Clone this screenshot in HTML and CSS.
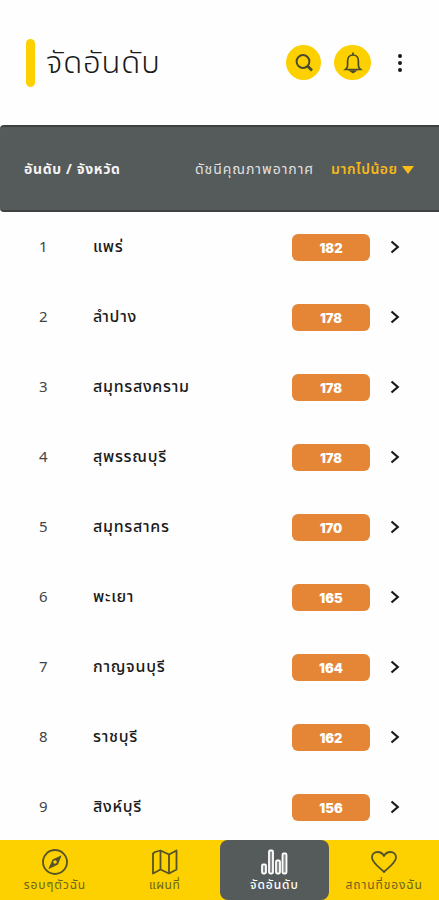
FILE: index.html
```html
<!DOCTYPE html>
<html lang="th">
<head>
    <meta charset="UTF-8">
    <meta name="viewport" content="width=device-width, initial-scale=1.0">
    <title>จัดอันดับ</title>
    <link rel="stylesheet" href="styles.css">
</head>
<body>
    <div class="app">
        <header class="top-bar">
            <span class="title-mark"></span>
            <h1>จัดอันดับ</h1>
            <button class="round-btn search-btn" aria-label="ค้นหา">
                <svg width="20" height="20" viewBox="0 0 20 20" fill="none" stroke="#4a4a30">
                    <circle cx="9" cy="8.5" r="6.4" stroke-width="2"/>
                    <path d="M13 12.5l5 5" stroke-width="2.6"/>
                </svg>
            </button>
            <button class="round-btn bell-btn" aria-label="แจ้งเตือน">
                <svg width="20" height="22" viewBox="0 0 20 22" fill="none" stroke="#4a4a30" stroke-width="1.7">
                    <path d="M2.500 17.500c1.500-1.200 2.100-2 2.100-4V9c0-3.500 2.200-6 5.400-6s5.400 2.500 5.400 6v4.500c0 2 .6 2.800 2.100 4z"/>
                    <path d="M10 .5v2.500"/>
                    <path d="M8 19.200h4l-2 1.300z" fill="#4a4a30"/>
                </svg>
            </button>
            <button class="more-btn" aria-label="เมนู">
                <span></span><span></span><span></span>
            </button>
        </header>

        <div class="list-header">
            <span class="col-rank">อันดับ / จังหวัด</span>
            <span class="col-index">ดัชนีคุณภาพอากาศ</span>
            <span class="col-sort">มากไปน้อย</span>
            <span class="caret"></span>
        </div>

        <ul class="rank-list" id="rankList"></ul>

        <nav class="bottom-nav">
            <a class="nav-item">
                <svg width="28" height="28" viewBox="0 0 28 28" fill="none" stroke="#55532a" stroke-width="1.8">
                    <circle cx="14" cy="14" r="12"/>
                    <path d="M19.500 8.500l-3 7.500-8 4 3.500-8z" fill="#55532a" stroke-width="1.200"/>
                    <circle cx="14" cy="14" r="1.800" fill="#fdd000" stroke="none"/>
                </svg>
                <span class="nav-label nav-around">รอบๆตัวฉัน</span>
            </a>
            <a class="nav-item">
                <svg width="28" height="28" viewBox="0 0 28 28" fill="none" stroke="#55532a" stroke-width="1.8" stroke-linejoin="round">
                    <path d="M2 5.500l2-1.500 5.500-1.500 8.500 4 7.500-4v19l-7.500 4-8.500-4-7.500 4z"/>
                    <path d="M9.500 2.500v19M18 6.500v19"/>
                </svg>
                <span class="nav-label nav-map">แผนที่</span>
            </a>
            <a class="nav-item active">
                <svg width="28" height="28" viewBox="0 0 28 28" fill="#8b8e8e" stroke="#fff" stroke-width="1.8">
                    <rect x="2" y="16.500" width="4" height="9" rx="1.200"/>
                    <rect x="9" y="2.500" width="4" height="23" rx="1.200"/>
                    <rect x="16" y="12.500" width="4" height="13" rx="1.200"/>
                    <rect x="22.500" y="5.500" width="4" height="20" rx="1.200"/>
                </svg>
                <span class="nav-label nav-rank">จัดอันดับ</span>
            </a>
            <a class="nav-item">
                <svg width="28" height="28" viewBox="0 0 28 28" fill="none" stroke="#55532a" stroke-width="1.8" stroke-linejoin="round">
                    <path d="M14 24C10 20 2 14.500 2 9.500 2 6 4.500 4 7.500 4 10.500 4 13 6 14 8c1-2 3.500-4 6.500-4 3 0 5.500 2 5.500 5.500C26 14.500 18 20 14 24z"/>
                </svg>
                <span class="nav-label nav-mine">สถานที่ของฉัน</span>
            </a>
        </nav>
    </div>

    <script>
        const provinces = [
            { name: 'แพร่', aqi: 182 },
            { name: 'ลำปาง', aqi: 178 },
            { name: 'สมุทรสงคราม', aqi: 178 },
            { name: 'สุพรรณบุรี', aqi: 178 },
            { name: 'สมุทรสาคร', aqi: 170 },
            { name: 'พะเยา', aqi: 165 },
            { name: 'กาญจนบุรี', aqi: 164 },
            { name: 'ราชบุรี', aqi: 162 },
            { name: 'สิงห์บุรี', aqi: 156 }
        ];

        document.getElementById('rankList').innerHTML = provinces.map((province, index) => `
            <li class="rank-row">
                <span class="rank-no">${index + 1}</span>
                <span class="province">${province.name}</span>
                <span class="aqi">${province.aqi}</span>
                <svg class="chevron" width="10" height="14" viewBox="0 0 10 14" fill="none" stroke="#1a1a1a" stroke-width="2.2">
                    <path d="M1.500 1.500L7.800 7l-6.300 5.500"/>
                </svg>
            </li>`).join('');
    </script>
</body>
</html>
```
FILE: styles.css
```css
:root {
    --yellow: #fdd000;
    --grey: #555a5a;
    --orange: #e58637;
    --olive: #6b6420;
}

* {
    margin: 0;
    padding: 0;
    box-sizing: border-box;
}

body {
    font-family: "Noto Sans Thai", "Noto Sans", sans-serif;
    background-color: #fefefe;
    color: #1a1a1a;
}

button {
    border: none;
    background: none;
}

.app {
    display: flex;
    flex-direction: column;
    height: 900px;
    overflow: hidden;
}

.top-bar {
    display: flex;
    align-items: center;
    height: 125px;
    padding: 0 37px 0 26px;
    flex-shrink: 0;
}

.title-mark {
    width: 9px;
    height: 48px;
    border-radius: 5px;
    background-color: var(--yellow);
}

h1 {
    flex: 1;
    margin-left: 11px;
    padding-top: 3px;
    font-size: 31px;
    font-weight: 300;
    letter-spacing: 0.9px;
    line-height: 48px;
    white-space: nowrap;
}

.round-btn {
    display: flex;
    align-items: center;
    justify-content: center;
    width: 35px;
    height: 35px;
    border-radius: 50%;
    background-color: var(--yellow);
}

.bell-btn {
    width: 37px;
    margin-left: 13px;
}

.more-btn {
    display: flex;
    flex-direction: column;
    gap: 3px;
    margin-left: 27px;
}

.more-btn span {
    width: 4px;
    height: 4px;
    border-radius: 50%;
    background-color: #1a1a1a;
}

.list-header {
    display: flex;
    align-items: center;
    flex-shrink: 0;
    height: 87px;
    padding: 2px 24px 0;
    border-top: 2px solid #3e4242;
    border-bottom: 2px solid #3e4242;
    border-radius: 4px 0 0 4px;
    background-color: var(--grey);
    color: #e0e0e0;
    font-size: 14px;
    white-space: nowrap;
}

.col-rank {
    width: 171px;
    color: #f4f4f4;
    font-weight: 700;
    letter-spacing: 0.65px;
}

.col-index {
    width: 136px;
    letter-spacing: 0.95px;
}

.col-sort {
    width: 67px;
    color: #f5b81c;
    font-weight: 600;
    letter-spacing: 0.55px;
}

.caret {
    margin-left: 4px;
    border: 6.5px solid transparent;
    border-top: 8px solid #f9bd18;
    border-bottom: 0;
}

.rank-list {
    flex: 1;
    min-height: 0;
    overflow: hidden;
    list-style-type: none;
}

.rank-row {
    display: flex;
    align-items: center;
    height: 70px;
    padding-left: 39px;
}

.rank-no {
    width: 54px;
    color: #444;
    font-size: 15px;
}

.province {
    width: 199px;
    font-size: 16px;
    font-weight: 500;
    letter-spacing: 0.7px;
    white-space: nowrap;
}

.aqi {
    width: 78px;
    height: 27px;
    border-radius: 6px;
    background-color: var(--orange);
    color: #fff;
    font-family: Inter, sans-serif;
    font-size: 13px;
    font-weight: 900;
    line-height: 28px;
    text-align: center;
}

.chevron {
    margin-left: 20px;
}

.bottom-nav {
    display: flex;
    flex-shrink: 0;
    height: 60px;
    background-color: var(--yellow);
}

.nav-item {
    display: flex;
    flex-direction: column;
    align-items: center;
    flex: 1;
    padding-top: 8px;
    color: var(--olive);
    font-size: 12px;
}

.nav-item.active {
    border-radius: 8px;
    background-color: var(--grey);
    color: #fff;
}

.nav-label {
    letter-spacing: 0.9px;
    line-height: 18px;
    white-space: nowrap;
}

.nav-map {
    letter-spacing: 0.5px;
}

.nav-rank {
    font-weight: 500;
}
```
